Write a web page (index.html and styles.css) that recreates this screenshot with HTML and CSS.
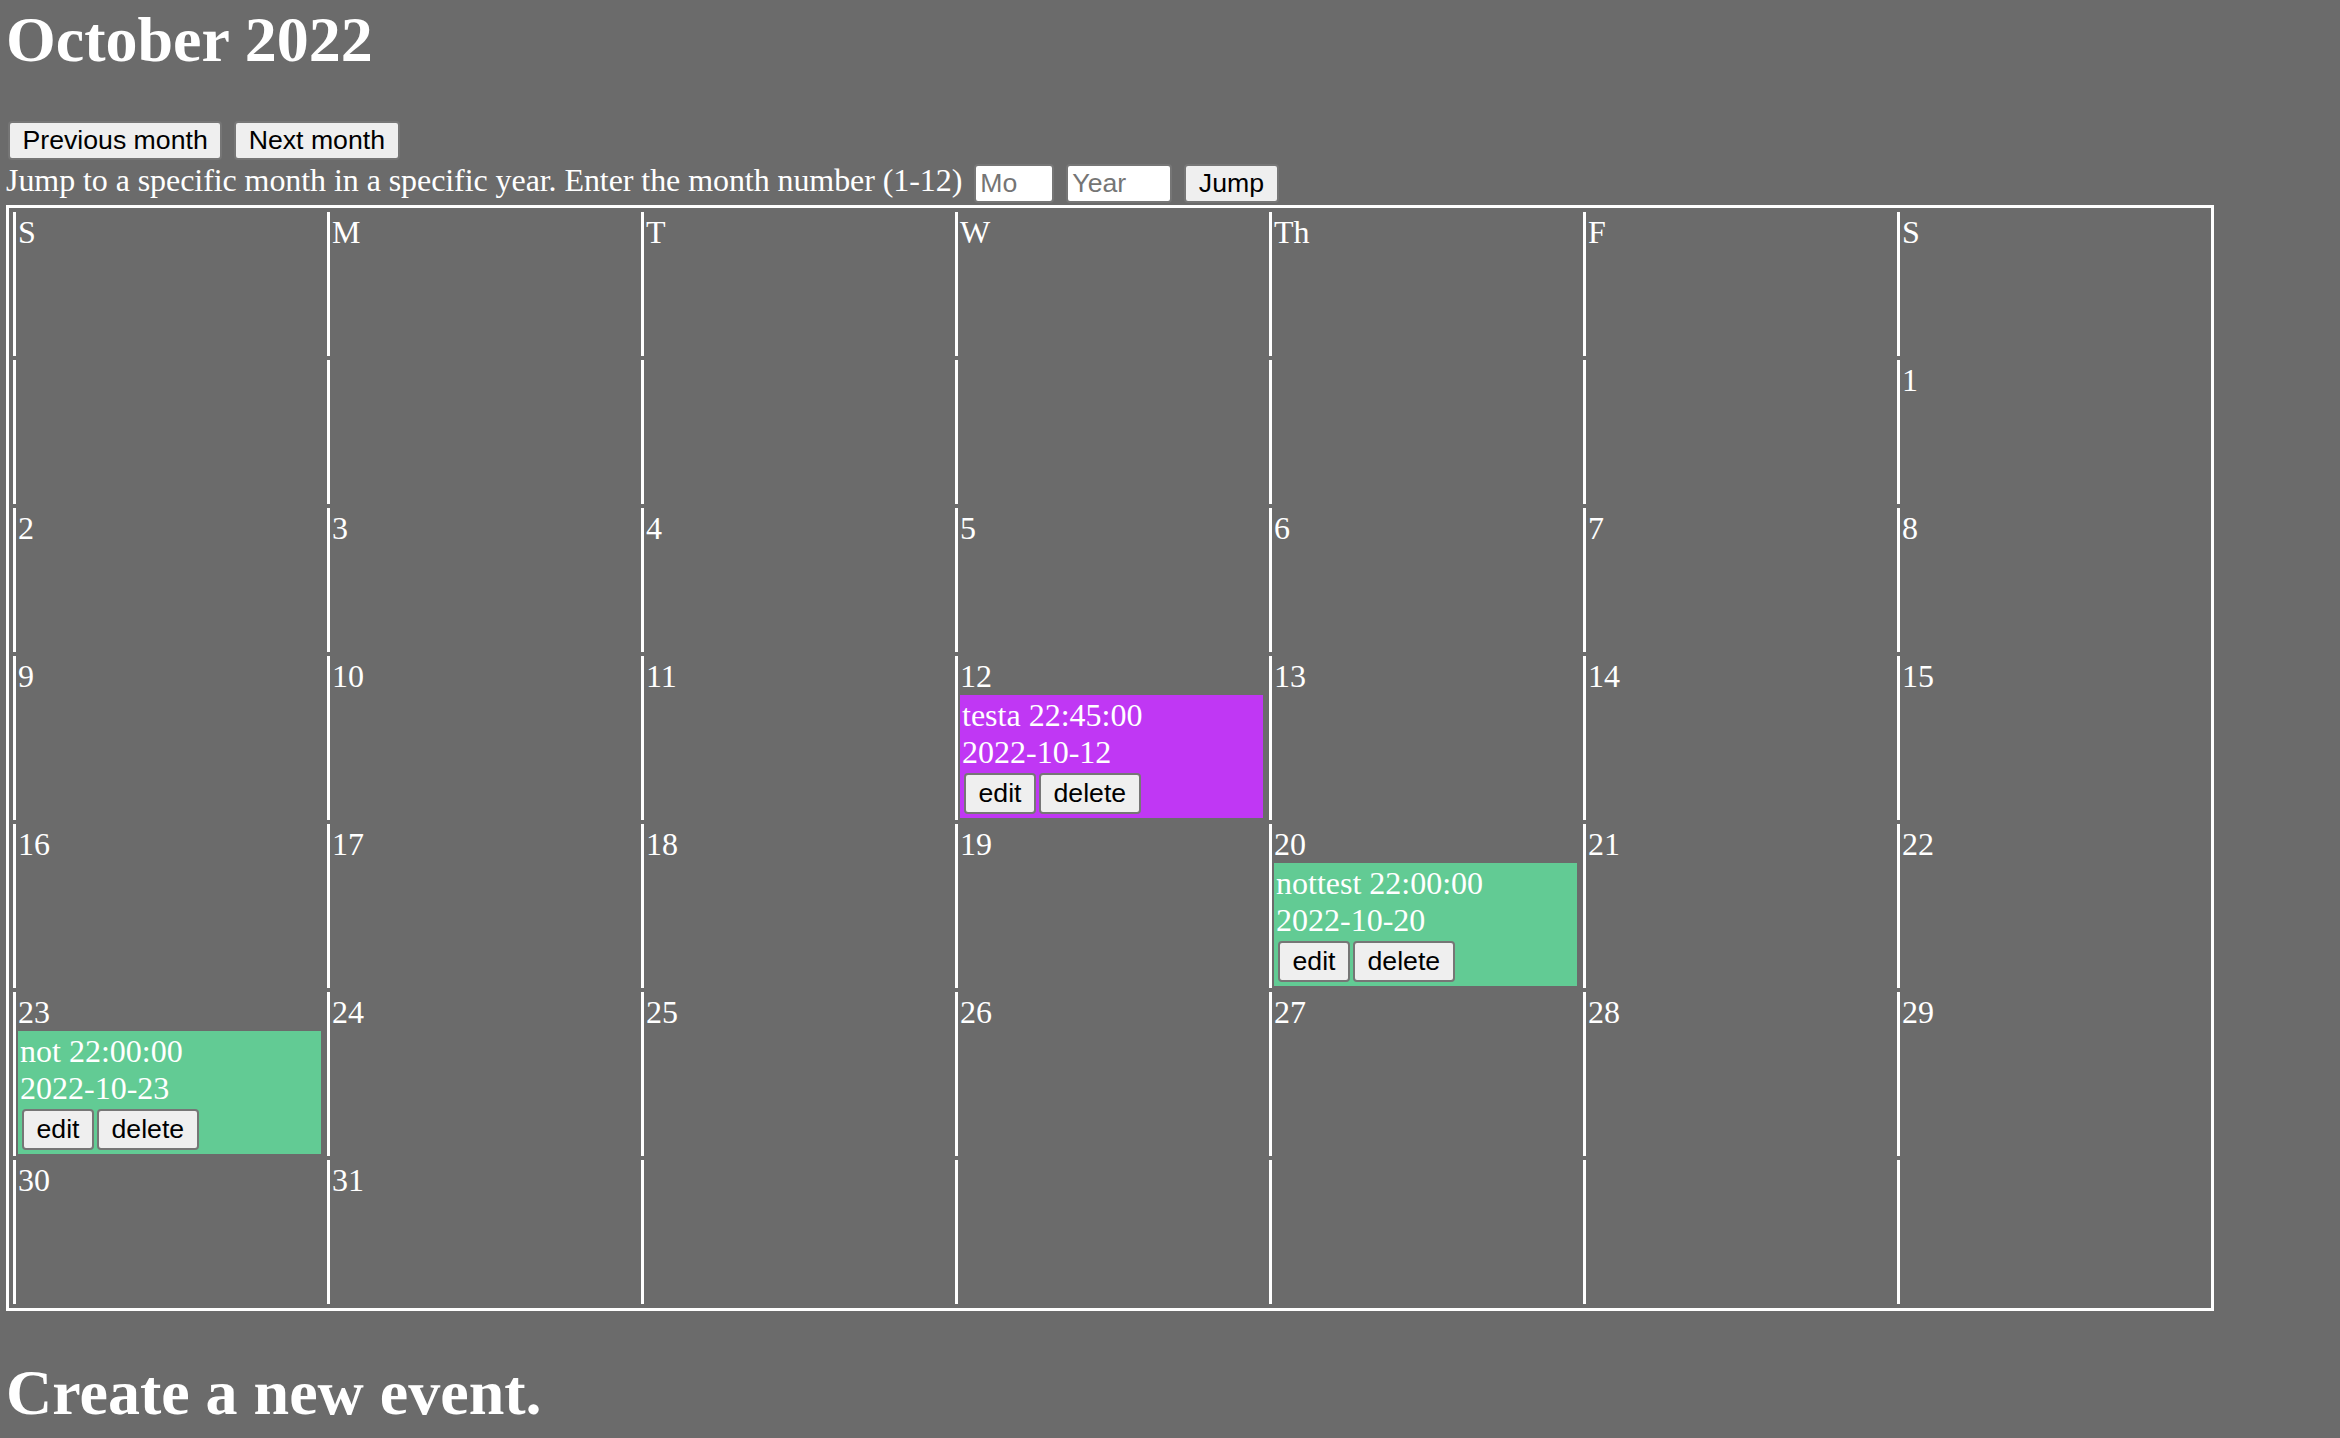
FILE: index.html
```html
<!DOCTYPE html>
<html lang="en">
<head>
<meta charset="utf-8">
<title>Calendar</title>
<link rel="stylesheet" href="styles.css">
</head>
<body>
<h1 class="title">October 2022</h1>
<div class="nav">
  <button class="btn" type="button">Previous month</button>
  <button class="btn" type="button">Next month</button>
</div>
<div class="jump">
  <span class="jump-text">Jump to a specific month in a specific year. Enter the month number (1-12)</span>
  <input class="field field-mo" type="text" placeholder="Mo">
  <input class="field field-year" type="text" placeholder="Year">
  <button class="btn" type="button">Jump</button>
</div>
<div class="calendar">
  <div class="cell"><div class="num">S</div></div>
  <div class="cell"><div class="num">M</div></div>
  <div class="cell"><div class="num">T</div></div>
  <div class="cell"><div class="num">W</div></div>
  <div class="cell"><div class="num">Th</div></div>
  <div class="cell"><div class="num">F</div></div>
  <div class="cell"><div class="num">S</div></div>

  <div class="cell"></div>
  <div class="cell"></div>
  <div class="cell"></div>
  <div class="cell"></div>
  <div class="cell"></div>
  <div class="cell"></div>
  <div class="cell"><div class="num">1</div></div>

  <div class="cell"><div class="num">2</div></div>
  <div class="cell"><div class="num">3</div></div>
  <div class="cell"><div class="num">4</div></div>
  <div class="cell"><div class="num">5</div></div>
  <div class="cell"><div class="num">6</div></div>
  <div class="cell"><div class="num">7</div></div>
  <div class="cell"><div class="num">8</div></div>

  <div class="cell"><div class="num">9</div></div>
  <div class="cell"><div class="num">10</div></div>
  <div class="cell"><div class="num">11</div></div>
  <div class="cell">
    <div class="num">12</div>
    <div class="event purple">
      <div class="event-line">testa 22:45:00</div>
      <div class="event-line">2022-10-12</div>
      <div class="event-actions"><button class="btn ev-btn" type="button">edit</button><button class="btn ev-btn" type="button">delete</button></div>
    </div>
  </div>
  <div class="cell"><div class="num">13</div></div>
  <div class="cell"><div class="num">14</div></div>
  <div class="cell"><div class="num">15</div></div>

  <div class="cell"><div class="num">16</div></div>
  <div class="cell"><div class="num">17</div></div>
  <div class="cell"><div class="num">18</div></div>
  <div class="cell"><div class="num">19</div></div>
  <div class="cell">
    <div class="num">20</div>
    <div class="event green">
      <div class="event-line">nottest 22:00:00</div>
      <div class="event-line">2022-10-20</div>
      <div class="event-actions"><button class="btn ev-btn" type="button">edit</button><button class="btn ev-btn" type="button">delete</button></div>
    </div>
  </div>
  <div class="cell"><div class="num">21</div></div>
  <div class="cell"><div class="num">22</div></div>

  <div class="cell">
    <div class="num">23</div>
    <div class="event green">
      <div class="event-line">not 22:00:00</div>
      <div class="event-line">2022-10-23</div>
      <div class="event-actions"><button class="btn ev-btn" type="button">edit</button><button class="btn ev-btn" type="button">delete</button></div>
    </div>
  </div>
  <div class="cell"><div class="num">24</div></div>
  <div class="cell"><div class="num">25</div></div>
  <div class="cell"><div class="num">26</div></div>
  <div class="cell"><div class="num">27</div></div>
  <div class="cell"><div class="num">28</div></div>
  <div class="cell"><div class="num">29</div></div>

  <div class="cell"><div class="num">30</div></div>
  <div class="cell"><div class="num">31</div></div>
  <div class="cell"></div>
  <div class="cell"></div>
  <div class="cell"></div>
  <div class="cell"></div>
  <div class="cell"></div>
</div>
<h1 class="create">Create a new event.</h1>
</body>
</html>
```

FILE: styles.css
```css
html {
  background: #6b6b6b;
}

body {
  margin: 4px 6px;
  background: #6b6b6b;
  color: #ffffff;
  font-family: "Liberation Serif", "Times New Roman", serif;
  font-size: 32px;
}

.title {
  font-size: 64px;
  line-height: 72px;
  font-weight: bold;
  margin: 0 0 45px;
}

.create {
  font-size: 64px;
  line-height: 72px;
  font-weight: bold;
  margin: 46px 0 0;
}

.nav {
  display: flex;
  gap: 12px;
  padding-left: 2px;
}

.btn {
  box-sizing: border-box;
  height: 39px;
  padding: 0 12.5px;
  border: 2px solid #767676;
  border-radius: 4px;
  background: #efefef;
  color: #000000;
  font-family: "Liberation Sans", Arial, sans-serif;
  font-size: 26.67px;
  line-height: 1;
  margin: 0;
  cursor: pointer;
}

.jump {
  display: flex;
  align-items: flex-start;
  gap: 12px;
  height: 45px;
}

.jump-text {
  line-height: 36px;
  margin-top: 2px;
  white-space: nowrap;
  letter-spacing: -0.07px;
}

.jump .btn {
  margin-top: 4px;
}

.field {
  box-sizing: border-box;
  margin: 4px 0 0;
  height: 39px;
  padding: 2px 4px;
  border: 2px solid #767676;
  border-radius: 4px;
  background: #ffffff;
  color: #000000;
  font-family: "Liberation Sans", Arial, sans-serif;
  font-size: 26.67px;
}

.field::placeholder {
  color: #757575;
}

.field-mo {
  width: 80px;
}

.field-year {
  width: 106px;
}

.calendar {
  display: grid;
  grid-template-columns: repeat(7, 310px);
  gap: 4px;
  padding: 4px;
  border: 3px solid #ffffff;
  width: max-content;
}

.cell {
  box-sizing: border-box;
  min-height: 144px;
  padding: 2px;
  border-left: 3px solid #ffffff;
}

.num {
  height: 37px;
  line-height: 37px;
}

.event {
  padding: 2px 2px 4px;
}

.event-line {
  line-height: 37px;
  white-space: nowrap;
}

.event-actions {
  display: flex;
  margin-top: 2px;
}

.ev-btn {
  height: 41px;
  margin-left: 2px;
}

.ev-btn + .ev-btn {
  margin-left: 3px;
}

.purple {
  background: #c037f4;
}

.green {
  background: #62cb94;
}
```
